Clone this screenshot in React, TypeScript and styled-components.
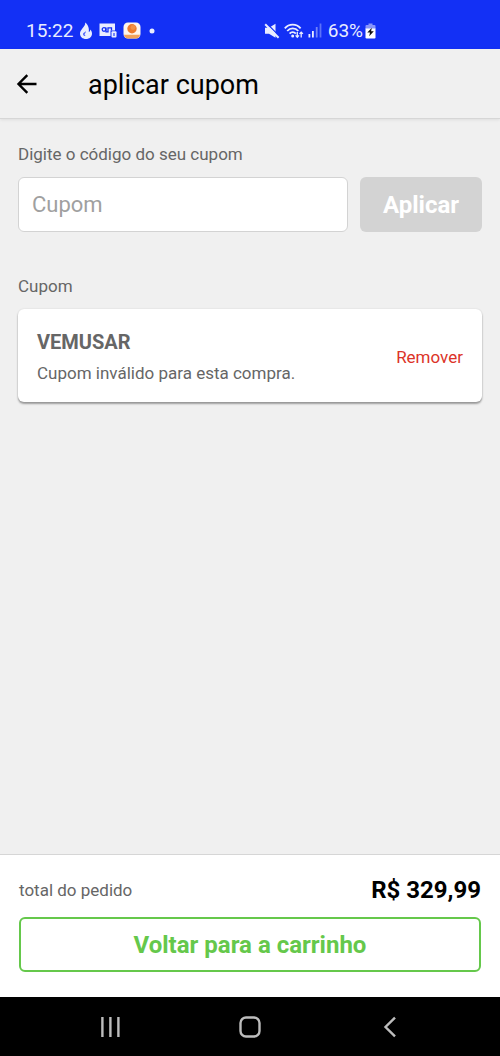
import React, { useState } from "react";
import styled, { createGlobalStyle } from "styled-components";

const GlobalStyle = createGlobalStyle`
  * { box-sizing: border-box; }
  body {
    margin: 0;
    background: #f0f0f0;
    font-family: Roboto, "Liberation Sans", sans-serif;
    color: #000;
  }
  button, input { font-family: inherit; margin: 0; }
  svg { display: block; flex: none; }
`;

const Screen = styled.div`
  display: flex;
  flex-direction: column;
  min-height: 100vh;
`;

const StatusBar = styled.div`
  display: flex;
  justify-content: space-between;
  align-items: center;
  height: 49px;
  padding: 12px 124px 0 26px;
  background: #1330f5;
  color: #e9edff;
`;

const StatusGroup = styled.div<{ $gap: number }>`
  display: flex;
  align-items: center;
  gap: ${(p) => p.$gap}px;
`;

const StatusText = styled.span`
  font-size: 19px;
  line-height: 24px;
`;

const BatteryStatus = styled.div`
  display: flex;
  align-items: center;
  gap: 2px;
  padding-left: 2px;
`;

const Header = styled.header`
  display: flex;
  align-items: center;
  gap: 48px;
  height: 70px;
  padding: 0 14px;
  border-bottom: 1px solid #d6d6d6;
  box-shadow: 0 1px 3px rgba(0, 0, 0, 0.08);
`;

const IconButton = styled.button`
  display: flex;
  padding: 0;
  border: 0;
  background: none;
  color: inherit;
  cursor: pointer;
`;

const Title = styled.h1`
  margin: 0;
  padding-top: 2px;
  font-size: 27px;
  line-height: 32px;
  font-weight: 400;
`;

const Main = styled.main`
  flex: 1;
  padding: 24px 18px;
`;

const Label = styled.label`
  display: block;
  font-size: 17px;
  line-height: 22px;
  color: #666;
`;

const SectionTitle = styled.h2`
  margin: 43px 0 12px;
  font-size: 17px;
  line-height: 22px;
  font-weight: 400;
  color: #666;
`;

const CouponForm = styled.form`
  display: flex;
  gap: 12px;
  margin-top: 12px;
`;

const CouponInput = styled.input`
  flex: 1;
  min-width: 0;
  height: 55px;
  padding: 0 13px;
  border: 1px solid #d3d3d3;
  border-radius: 6px;
  background: #fff;
  font-size: 22px;
  color: #333;
  outline: none;
  &::placeholder { color: #a0a0a0; opacity: 1; }
`;

const ApplyButton = styled.button`
  width: 122px;
  height: 55px;
  padding: 0;
  border: 0;
  border-radius: 6px;
  background: #d3d3d3;
  color: #fff;
  font-size: 24px;
  font-weight: 700;
`;

const Card = styled.article`
  display: flex;
  align-items: center;
  justify-content: space-between;
  padding: 18px 19px 15px;
  border-radius: 6px;
  background: #fff;
  box-shadow: 0 2px 2px rgba(0, 0, 0, 0.35), 0 0 2px rgba(0, 0, 0, 0.12);
  color: #666;
`;

const CouponCode = styled.h3`
  margin: 0;
  font-size: 20px;
  line-height: 30px;
  font-weight: 700;
`;

const CouponNote = styled.p`
  margin: 2px 0 0;
  font-size: 17px;
  line-height: 28px;
`;

const RemoveButton = styled.button`
  padding: 0;
  border: 0;
  background: none;
  color: #dc3328;
  font-size: 17px;
  line-height: 22px;
  cursor: pointer;
`;

const Footer = styled.footer`
  padding: 20px 19px 25px;
  border-top: 1px solid #d6d6d6;
  background: #fff;
`;

const TotalRow = styled.div`
  display: flex;
  align-items: center;
  justify-content: space-between;
  margin-bottom: 12px;
  font-size: 17px;
  line-height: 30px;
  color: #666;
`;

const TotalValue = styled.strong`
  font-size: 24px;
  font-weight: 700;
  color: #000;
`;

const BackToCart = styled.button`
  width: 100%;
  height: 55px;
  padding: 0;
  border: 2px solid #65c84b;
  border-radius: 6px;
  background: #fff;
  color: #65c84b;
  font-size: 24px;
  font-weight: 700;
  cursor: pointer;
`;

const NavBar = styled.nav`
  display: flex;
  justify-content: center;
  align-items: center;
  gap: 116px;
  height: 59px;
  background: #000;
  color: #bdbdbd;
`;

const FlameIcon = () => (
  <svg width="14" height="18" viewBox="0 0 14 18">
    <path d="M6.2 0.6C6.6 3.2 4.8 4.8 3 7C1.7 8.6 1 10 1 11.5C1 14.8 3.600 17 7 17C10.400 17 13 14.800 13 11.500C13 9.500 12 8.200 11.200 7.400C11.300 9 10.600 9.800 9.800 10C10.400 6 8.800 2.400 6.200 0.600Z" fill="currentColor" />
    <path d="M6.800 9C7.200 10.600 5.700 11.300 5.600 12.600C5.600 13.500 6.200 14 6.900 14C5.200 14.300 4 13.200 4 12C4 10.800 6 10.400 6.800 9Z" fill="#4a5ff7" />
  </svg>
);

const VoicemailIcon = () => (
  <svg width="18" height="15" viewBox="0 0 18 15">
    <path d="M0.500 0.500H16V13H0.500Z" fill="currentColor" />
    <g fill="none" stroke="#1330f5" strokeWidth="1.300">
      <rect x="3.200" y="4.700" width="3.600" height="3.600" rx="1.800" />
      <path d="M7 4.500V8.800H9V4.800H12.500V7.500" />
    </g>
    <rect x="11.500" y="7.500" width="6.500" height="7.500" fill="#1330f5" />
    <rect x="12.500" y="8.300" width="5" height="6.200" rx="1" fill="currentColor" />
    <path d="M15 10V13" stroke="#1330f5" strokeWidth="1.100" />
  </svg>
);

const SunsetAppIcon = () => (
  <svg width="18" height="17" viewBox="0 0 18 17">
    <rect x="0.500" y="0.500" width="17" height="16" rx="4.500" fill="#fff5ec" />
    <circle cx="9" cy="6.700" r="4.700" fill="#ee7a2c" />
    <circle cx="10" cy="5.500" r="2.400" fill="#f39145" />
    <path d="M1 12.800H17C16.500 15.400 15.200 16.500 13 16.500H5C2.800 16.500 1.500 15.400 1 12.800Z" fill="#f2a35c" />
  </svg>
);

const DotIcon = () => (
  <svg width="8" height="6" viewBox="0 0 8 6" fill="currentColor">
    <circle cx="5" cy="3" r="2.500" />
  </svg>
);

const MuteIcon = () => (
  <svg width="16" height="16" viewBox="0 0 16 16">
    <path d="M1 4.800H5L11.500 0.800V14.800L5 10.800H1Z" fill="currentColor" />
    <path d="M3 0.700L15.400 13.100" stroke="#1330f5" strokeWidth="1.300" />
    <path d="M1.200 1.300L14.600 14.700" stroke="currentColor" strokeWidth="2" />
  </svg>
);

const WifiIcon = () => (
  <svg width="20" height="16" viewBox="0 0 20 16" fill="none" stroke="currentColor" strokeWidth="1.800">
    <path d="M0.800 5.300C5 0.300 12.400 0.300 16.600 5.300" />
    <path d="M3.200 8C6.300 4.400 11.200 4.400 14.300 8" />
    <path d="M5.600 10.600C7.400 8.600 10 8.600 11.800 10.600" />
    <circle cx="8.700" cy="12.900" r="1.500" fill="currentColor" stroke="none" />
    <path d="M13.300 9V14M11.600 12.400L13.300 14.200L15 12.400" strokeWidth="1.300" />
    <path d="M17.200 14.500V9.300M15.500 10.900L17.200 9.100L18.900 10.900" strokeWidth="1.300" />
  </svg>
);

const SignalIcon = () => (
  <svg width="14" height="15" viewBox="0 0 14 15" fill="currentColor">
    <rect x="0.500" y="11" width="1.800" height="3.500" />
    <rect x="4" y="8" width="1.800" height="6.500" />
    <rect x="7.800" y="4" width="1.800" height="10.500" opacity="0.450" />
    <rect x="11.600" y="0.500" width="1.800" height="14" opacity="0.350" />
  </svg>
);

const BatteryIcon = () => (
  <svg width="11" height="16" viewBox="0 0 11 16">
    <path d="M3.500 0.500H7.500V2H9.500Q10.500 2 10.500 3V6H0.500V3Q0.500 2 1.500 2H3.500Z" fill="#8794fa" />
    <path d="M0.500 5.500H10.500V14.300Q10.500 15.500 9.500 15.500H1.500Q0.500 15.500 0.500 14.300Z" fill="#fff" />
    <path d="M6.800 4.800L2.300 9.600H5L4.200 13.300L8.800 8.200H6.100Z" fill="#111" />
  </svg>
);

const ArrowLeftIcon = () => (
  <svg width="26" height="26" viewBox="0 0 26 26" fill="none" stroke="currentColor" strokeWidth="2.400">
    <path d="M22.500 13H5M13.300 4.200L4.500 13L13.300 21.800" />
  </svg>
);

const RecentsIcon = () => (
  <svg width="24" height="24" viewBox="0 0 24 24" stroke="currentColor" strokeWidth="2.400">
    <path d="M4.400 2V22M12.400 2V22M20.400 2V22" />
  </svg>
);

const HomeIcon = () => (
  <svg width="24" height="24" viewBox="0 0 24 24" fill="none" stroke="currentColor" strokeWidth="2.400">
    <rect x="2.500" y="2.500" width="19" height="19" rx="5.500" />
  </svg>
);

const BackIcon = () => (
  <svg width="24" height="24" viewBox="0 0 24 24" fill="none" stroke="currentColor" strokeWidth="2.400">
    <path d="M17 2.600L7.500 12L17 21.400" />
  </svg>
);

export default function App() {
  const [code, setCode] = useState("");

  return (
    <Screen>
      <GlobalStyle />
      <StatusBar>
        <StatusGroup $gap={6}>
          <StatusText>15:22</StatusText>
          <FlameIcon />
          <VoicemailIcon />
          <SunsetAppIcon />
          <DotIcon />
        </StatusGroup>
        <StatusGroup $gap={4}>
          <MuteIcon />
          <WifiIcon />
          <SignalIcon />
          <BatteryStatus>
            <StatusText>63%</StatusText>
            <BatteryIcon />
          </BatteryStatus>
        </StatusGroup>
      </StatusBar>

      <Header>
        <IconButton type="button" aria-label="Voltar">
          <ArrowLeftIcon />
        </IconButton>
        <Title>aplicar cupom</Title>
      </Header>

      <Main>
        <Label htmlFor="coupon">Digite o código do seu cupom</Label>
        <CouponForm onSubmit={(e) => e.preventDefault()}>
          <CouponInput
            id="coupon"
            type="text"
            placeholder="Cupom"
            value={code}
            onChange={(e) => setCode(e.target.value)}
          />
          <ApplyButton type="submit" disabled={!code}>
            Aplicar
          </ApplyButton>
        </CouponForm>

        <SectionTitle>Cupom</SectionTitle>
        <Card>
          <div>
            <CouponCode>VEMUSAR</CouponCode>
            <CouponNote>Cupom inválido para esta compra.</CouponNote>
          </div>
          <RemoveButton type="button">Remover</RemoveButton>
        </Card>
      </Main>

      <Footer>
        <TotalRow>
          <span>total do pedido</span>
          <TotalValue>R$ 329,99</TotalValue>
        </TotalRow>
        <BackToCart type="button">Voltar para a carrinho</BackToCart>
      </Footer>

      <NavBar>
        <IconButton type="button" aria-label="Recentes">
          <RecentsIcon />
        </IconButton>
        <IconButton type="button" aria-label="Início">
          <HomeIcon />
        </IconButton>
        <IconButton type="button" aria-label="Voltar">
          <BackIcon />
        </IconButton>
      </NavBar>
    </Screen>
  );
}
